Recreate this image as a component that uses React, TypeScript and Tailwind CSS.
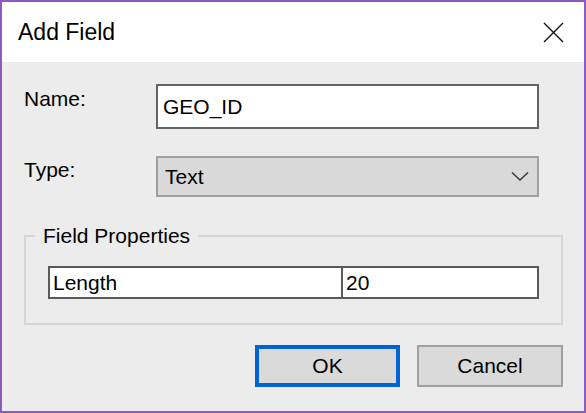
import React from "react";

const font = { fontFamily: '"Liberation Sans", Arial, sans-serif' };

export default function App() {
  return (
    <div
      className="w-[586px] h-[413px] border-2 border-[#8a5cc2] flex flex-col text-black text-[21px] leading-[24px]"
      style={font}
    >
      {/* Title bar */}
      <div className="h-[60px] bg-white flex items-center justify-between pl-[16px] pr-[20px]">
        <span className="text-[23px]">Add Field</span>
        <button className="w-[22px] h-[22px] flex items-center justify-center">
          <svg width="21" height="21" viewBox="0 0 21 21">
            <path d="M1 1 L20 20 M20 1 L1 20" stroke="#111" strokeWidth="1.4" fill="none" />
          </svg>
        </button>
      </div>

      {/* Body */}
      <div className="flex-1 bg-[#ececec] flex flex-col pl-[22px] pr-[22px]">
        <div className="flex items-start mt-[22px]">
          <label className="w-[132px] pt-[3px]">Name:</label>
          <div className="w-[383px] h-[45px] bg-white border-2 border-[#646464] flex items-center px-[5px]">
            GEO_ID
          </div>
        </div>

        <div className="flex items-start mt-[27px]">
          <label className="w-[132px] pt-[2px]">Type:</label>
          <div className="w-[383px] h-[41px] bg-[#d9d9d9] border-2 border-[#a0a0a0] flex items-center justify-between pl-[7px] pr-[8px]">
            <span>Text</span>
            <svg width="18" height="11" viewBox="0 0 18 11">
              <polyline points="1,1.5 9,9 17,1.5" stroke="#3c3c3c" strokeWidth="1.6" fill="none" />
            </svg>
          </div>
        </div>

        {/* Field Properties group */}
        <div className="relative mt-[38px] h-[90px] w-[539px] border-2 border-[#d5d5d5] px-[22px] pt-[29px]">
          <span className="absolute top-[-13px] left-[9px] bg-[#ececec] px-[8px]">Field Properties</span>
          <div className="flex h-[33px] border-2 border-[#5a5a5a] bg-white">
            <div className="w-[293px] border-r-2 border-[#5a5a5a] flex items-center pl-[3px]">Length</div>
            <div className="flex-1 flex items-center pl-[3px]">20</div>
          </div>
        </div>

        <div className="flex justify-end gap-[17px] mt-[20px]">
          <button className="w-[145px] h-[42px] bg-[#dadada] border-[4px] border-[#0063d4] flex items-center justify-center">
            OK
          </button>
          <button className="w-[146px] h-[42px] bg-[#dadada] border-2 border-[#a0a0a0] flex items-center justify-center mr-[-1px]">
            Cancel
          </button>
        </div>
      </div>
    </div>
  );
}
